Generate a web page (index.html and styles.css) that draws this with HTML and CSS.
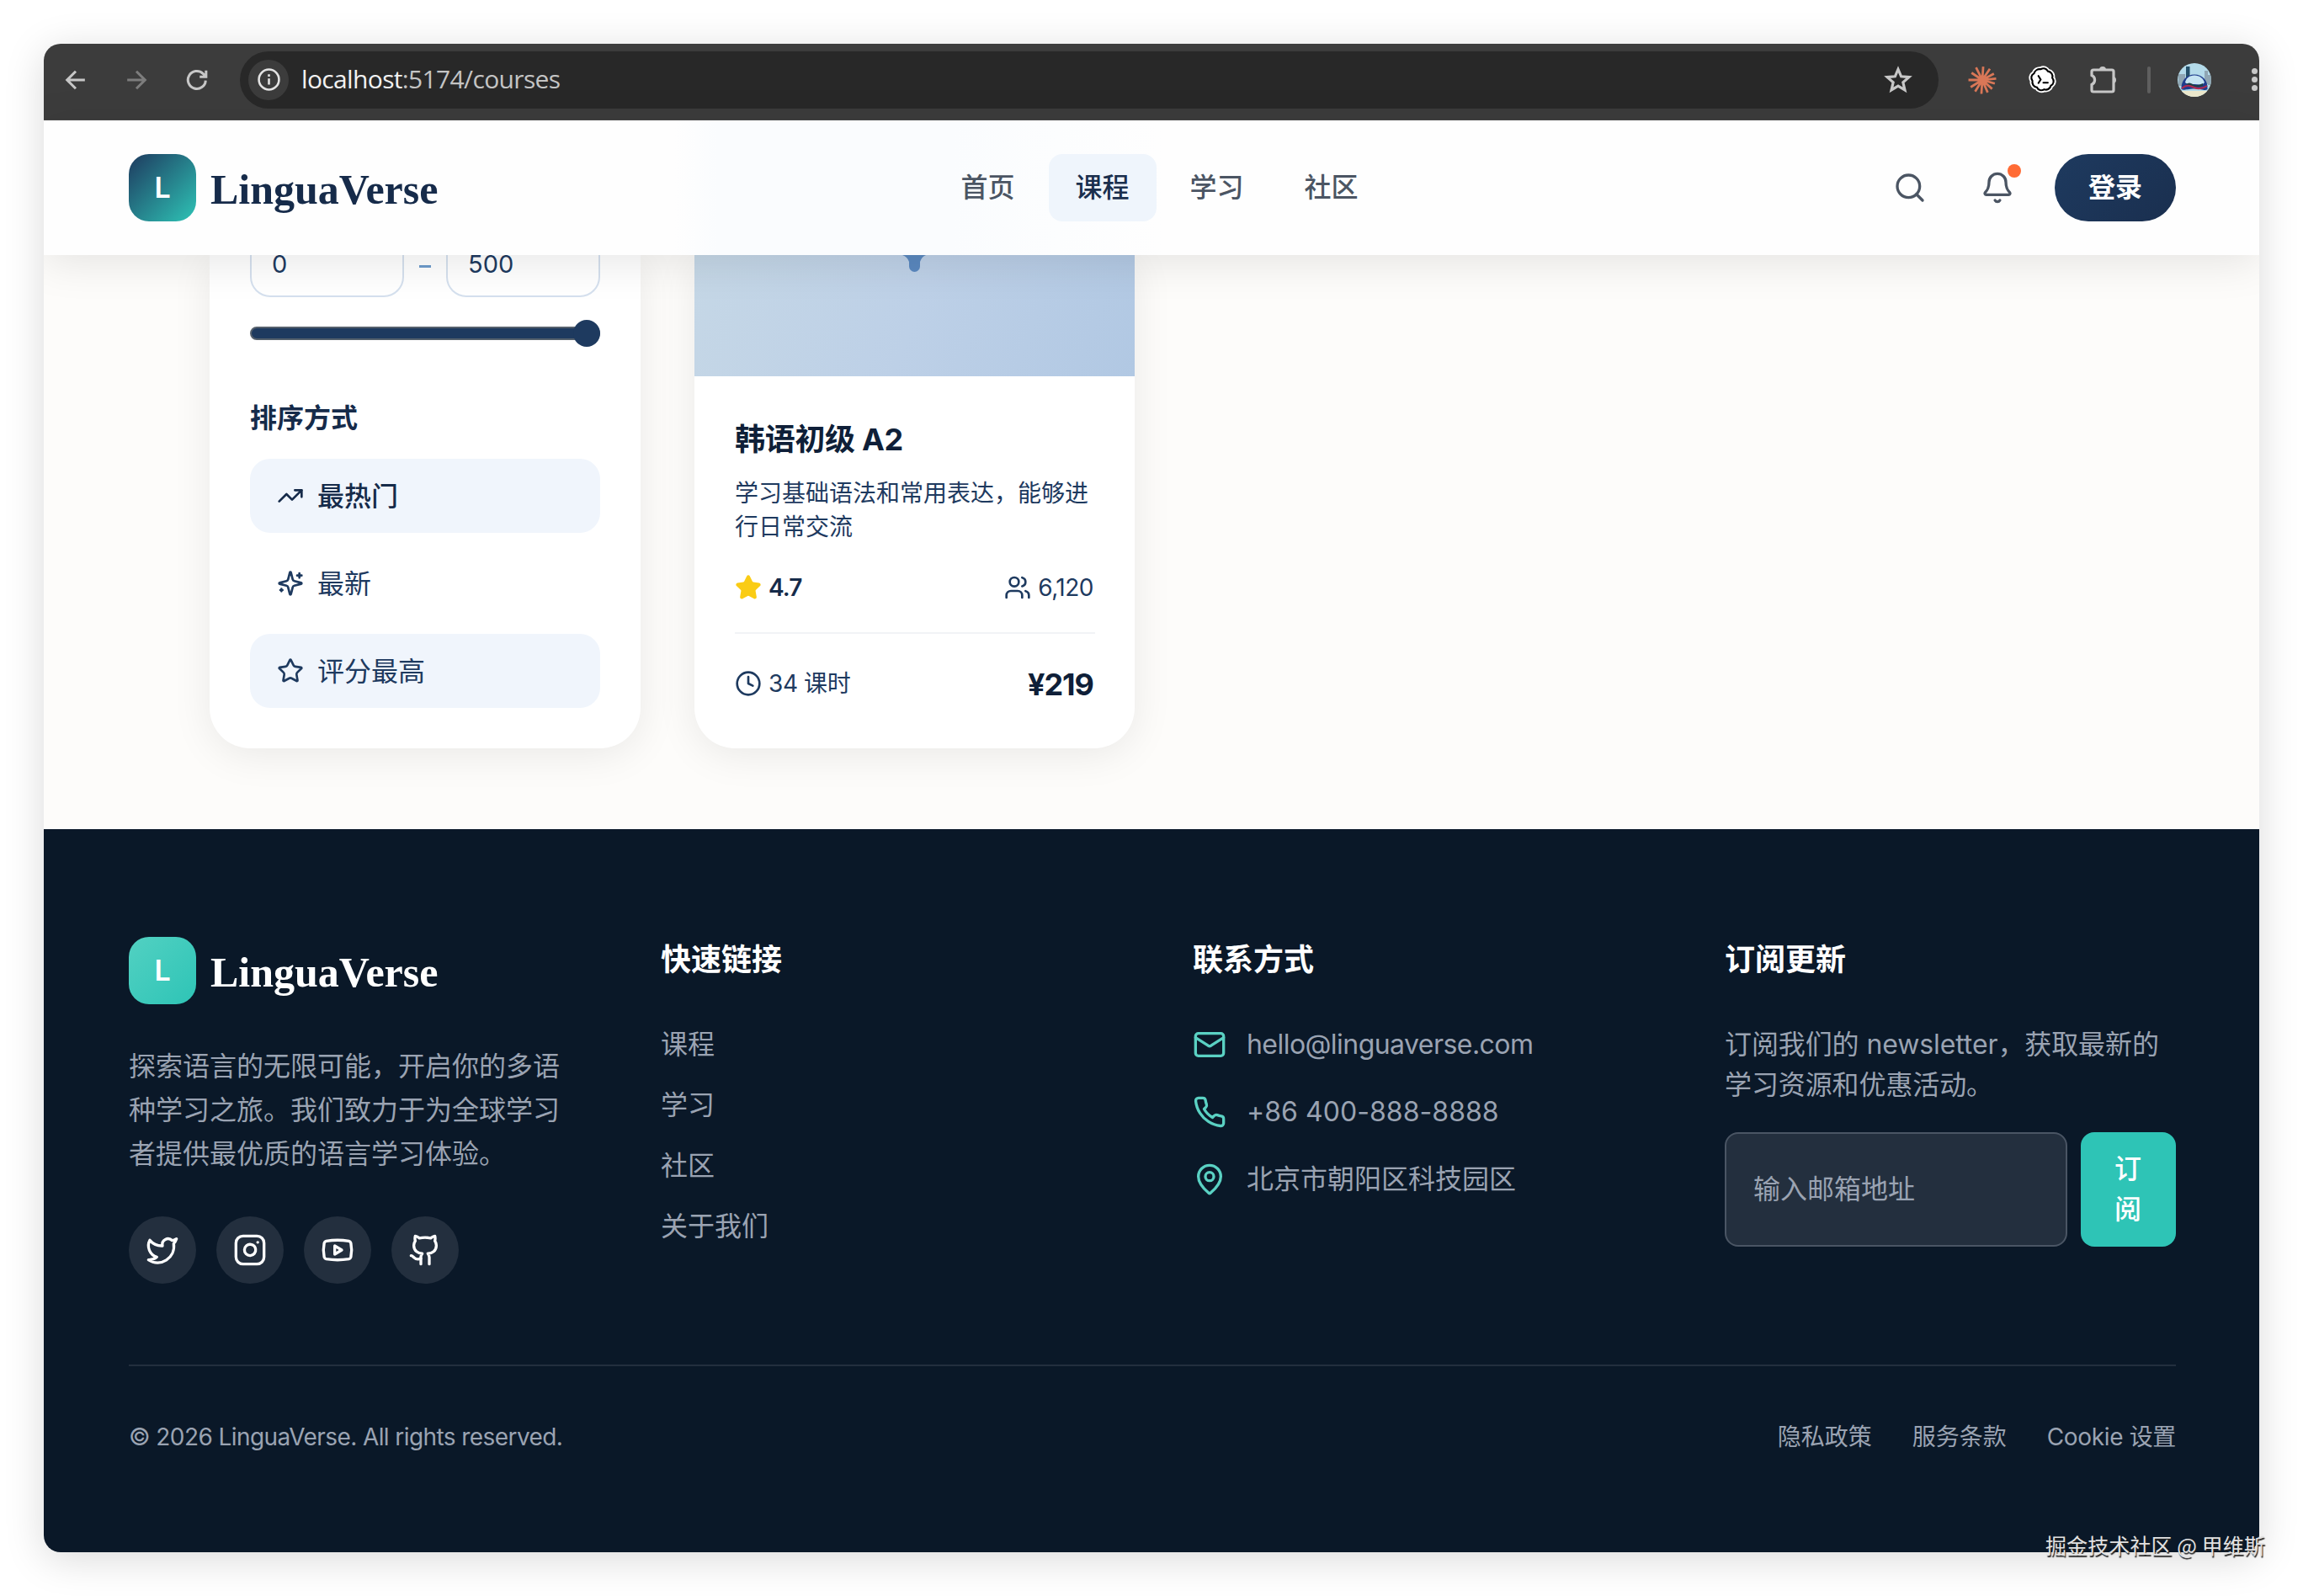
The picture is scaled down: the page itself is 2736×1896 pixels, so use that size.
FILE: index.html
```html
<!DOCTYPE html>
<html lang="zh-CN">
<head>
<meta charset="utf-8">
<title>LinguaVerse</title>
<link rel="stylesheet" href="styles.css">
</head>
<body>
<div class="window">
  <div class="toolbar">
    <svg class="tool" viewBox="0 0 24 24"><path d="M22 12H3M12 2.5 2.5 12l9.500 9.500"/></svg>
    <svg class="tool dim" viewBox="0 0 24 24"><path d="M2 12h19M12 2.500l9.500 9.500-9.500 9.500"/></svg>
    <svg class="tool" viewBox="0 0 24 24"><path d="M21.500 12.500a9.700 9.700 0 1 1-3-7.600L22 8.300M22 1.500v7h-7"/></svg>
    <div class="address">
      <div class="site-info"><svg viewBox="0 0 26 26"><circle cx="13" cy="13" r="11.500"/><path d="M13 11.800v7M13 7v2.600"/></svg></div>
      <div class="url">localhost<span>:5174/courses</span></div>
      <svg class="bookmark" viewBox="0 0 32 32"><path d="M16 4l3.400 8 8.800.8-6.700 5.800 2 8.600L16 22.700l-7.500 4.500 2-8.600-6.700-5.800 8.800-.8z"/></svg>
    </div>
    <svg class="ext burst" viewBox="-16 -16 32 32"><path d="M0 0 1-15M0 0 8.500-12.500M0 0 13-7M0 0 15.500-1.500M0 0 14 4M0 0 11 10M0 0 6 14M0 0-1 15.500M0 0-8 13M0 0-13 8M0 0-15.500 0M0 0-12-8M0 0-7-14"/></svg>
    <svg class="ext codex" viewBox="-16 -16 32 32"><path class="rim" d="M-2.500-12c3.500-2 6.500-.5 8 2.200 3.800.6 6 3.800 5 7.400 2.500 3 1.700 7-1.500 8.600-.8 3.600-4.300 5.500-7.500 4.300-3.200 2-6.800.8-8.200-2.300-3.500-.4-5.800-3.800-5-7.200-2.200-3-1.300-6.800 1.700-8.200C-9-10.500-6-12.500-2.500-12z"/><path class="ring" d="M-2.500-12c3.500-2 6.500-.5 8 2.200 3.800.6 6 3.800 5 7.400 2.500 3 1.700 7-1.500 8.600-.8 3.600-4.300 5.500-7.500 4.300-3.200 2-6.800.8-8.200-2.300-3.500-.4-5.800-3.800-5-7.200-2.200-3-1.300-6.800 1.700-8.200C-9-10.500-6-12.500-2.500-12z"/><path class="ring" d="M-5-4.500-2.500-.5-5 3.500M.5 3h5"/></svg>
    <svg class="ext puzzle" viewBox="0 0 36 38"><path class="tab" d="M12 7a4 4 0 0 1 8 0zM28 15a4 4 0 0 1 0 8z"/><path d="M5 7h22q2 0 2 2v22q0 2-2 2H5q-2 0-2-2v-6.500a6 6 0 0 0 0-11V9q0-2 2-2z"/></svg>
    <div class="separator"></div>
    <svg class="avatar" viewBox="0 0 40 40">
      <defs><clipPath id="face"><circle cx="20" cy="20" r="20"/></clipPath></defs>
      <g clip-path="url(#face)">
        <path fill="#b4dbea" d="M0 0h40v40H0z"/><path fill="#24506a" d="M10 4h4.500v18H10z"/><path fill="#8fa6b3" d="M1 13h8v14H1zM32 9h4v16h-4zM36 14h4v12h-4z"/>
        <path d="M4.500 31C4 20 11 13.500 20 13.500S36.500 20 35.500 31c-3 2.500-6-.5-15.500-.5S7.500 33 4.500 31z" fill="#1f3c8c"/>
        <path d="M9 23c1-5 5-8.500 11-8.500s10.500 3.500 12 8.500c-3 4-8 2-12 2s-8 1-11-2z" fill="#c5e4f2"/>
        <path d="M10 25q4-3 8 0t12-1v3q-9 3-20-2z" fill="#1d3f45"/>
        <path d="M5 30c6-5 10-3 15-1s9 2 15-2" fill="none" stroke="#b32a4e" stroke-width="2"/><path fill="#ece8cc" d="M0 33h40v7H0z"/>
      </g>
    </svg>
    <div class="dots"><i></i><i></i><i></i></div>
  </div>

  <header class="header">
    <div class="brand"><div class="mark">L</div><div class="name">LinguaVerse</div></div>
    <nav class="nav"><a>首页</a><a class="active">课程</a><a>学习</a><a>社区</a></nav>
    <div class="actions">
      <svg class="icon" viewBox="0 0 24 24"><circle cx="11" cy="11" r="8"/><path d="m21 21-4.340-4.340"/></svg>
      <div class="bell">
        <svg class="icon" viewBox="0 0 24 24"><path d="M10.268 21a2 2 0 0 0 3.464 0"/><path d="M3.262 15.326A1 1 0 0 0 4 17h16a1 1 0 0 0 .740-1.673C19.410 13.956 18 12.499 18 8A6 6 0 0 0 6 8c0 4.499-1.411 5.956-2.738 7.326"/></svg>
        <span class="badge"></span>
      </div>
      <div class="login">登录</div>
    </div>
  </header>

  <main class="content">
    <aside class="filters">
      <div class="range"><div class="field">0</div><span class="dash"></span><div class="field">500</div></div>
      <div class="slider"><div class="thumb"></div></div>
      <h3>排序方式</h3>
      <div class="options">
        <div class="option on medium"><svg class="icon" viewBox="0 0 24 24"><path d="M16 7h6v6"/><path d="m22 7-8.500 8.500-5-5L2 17"/></svg><span>最热门</span></div>
        <div class="option"><svg class="icon" viewBox="0 0 24 24"><path d="M9.937 15.500A2 2 0 0 0 8.500 14.063l-6.135-1.582a.5.5 0 0 1 0-.962L8.500 9.936A2 2 0 0 0 9.937 8.500l1.582-6.135a.5.5 0 0 1 .963 0L14.063 8.500A2 2 0 0 0 15.500 9.937l6.135 1.581a.5.5 0 0 1 0 .964L15.500 14.063a2 2 0 0 0-1.437 1.437l-1.582 6.135a.5.5 0 0 1-.963 0z"/><path d="M20 3v4M22 5h-4M4 17v2M5 18H3"/></svg><span>最新</span></div>
        <div class="option on"><svg class="icon" viewBox="0 0 24 24"><path d="M11.525 2.295a.53.53 0 0 1 .95 0l2.310 4.679a2.123 2.123 0 0 0 1.595 1.160l5.166.756a.53.53 0 0 1 .294.904l-3.736 3.638a2.123 2.123 0 0 0-.611 1.878l.882 5.140a.53.53 0 0 1-.771.560l-4.618-2.428a2.122 2.122 0 0 0-1.973 0L6.396 21.010a.53.53 0 0 1-.770-.560l.881-5.139a2.122 2.122 0 0 0-.611-1.879L2.160 9.795a.53.53 0 0 1 .294-.906l5.165-.755a2.122 2.122 0 0 0 1.597-1.160z"/></svg><span>评分最高</span></div>
      </div>
    </aside>
    <article class="course">
      <div class="cover"><svg viewBox="0 0 28 20"><path d="M0 0h28q-5 2-7 8v5.500a6.500 6.500 0 0 1-13 0V8Q6 2 0 0z"/></svg></div>
      <div class="info">
        <h2>韩语初级 A2</h2>
        <p>学习基础语法和常用表达，能够进行日常交流</p>
        <div class="row stats">
          <div class="pair rating"><svg class="icon star" viewBox="0 0 24 24"><path d="M11.525 2.295a.53.53 0 0 1 .95 0l2.310 4.679a2.123 2.123 0 0 0 1.595 1.160l5.166.756a.53.53 0 0 1 .294.904l-3.736 3.638a2.123 2.123 0 0 0-.611 1.878l.882 5.140a.53.53 0 0 1-.771.560l-4.618-2.428a2.122 2.122 0 0 0-1.973 0L6.396 21.010a.53.53 0 0 1-.770-.560l.881-5.139a2.122 2.122 0 0 0-.611-1.879L2.160 9.795a.53.53 0 0 1 .294-.906l5.165-.755a2.122 2.122 0 0 0 1.597-1.160z"/></svg>4.7</div>
          <div class="pair students"><svg class="icon" viewBox="0 0 24 24"><path d="M16 21v-2a4 4 0 0 0-4-4H6a4 4 0 0 0-4 4v2"/><path d="M16 3.128a4 4 0 0 1 0 7.744"/><path d="M22 21v-2a4 4 0 0 0-3-3.870"/><circle cx="9" cy="7" r="4"/></svg>6,120</div>
        </div>
        <div class="row meta">
          <div class="pair lessons"><svg class="icon" viewBox="0 0 24 24"><circle cx="12" cy="12" r="10"/><path d="M12 6v6l4 2"/></svg>34 课时</div>
          <div class="price">¥219</div>
        </div>
      </div>
    </article>
  </main>

  <footer class="footer">
    <div class="columns">
      <section>
        <div class="brand light"><div class="mark">L</div><div class="name">LinguaVerse</div></div>
        <p class="about">探索语言的无限可能，开启你的多语种学习之旅。我们致力于为全球学习者提供最优质的语言学习体验。</p>
        <div class="socials">
          <a><svg class="icon" viewBox="0 0 24 24"><path d="M22 4s-.7 2.100-2 3.400c1.600 10-9.400 17.300-18 11.600 2.200.1 4.400-.6 6-2C3 15.500.5 9.600 3 5c2.200 2.600 5.600 4.100 9 4-.9-4.200 4-6.600 7-3.800 1.100 0 3-1.200 3-1.200z"/></svg></a>
          <a><svg class="icon" viewBox="0 0 24 24"><rect width="20" height="20" x="2" y="2" rx="5"/><path d="M16 11.370A4 4 0 1 1 12.630 8 4 4 0 0 1 16 11.370z"/><path d="M17.500 6.500h.01"/></svg></a>
          <a><svg class="icon" viewBox="0 0 24 24"><path d="M2.500 17a24.120 24.120 0 0 1 0-10 2 2 0 0 1 1.400-1.400 49.560 49.560 0 0 1 16.200 0A2 2 0 0 1 21.500 7a24.120 24.120 0 0 1 0 10 2 2 0 0 1-1.400 1.400 49.550 49.550 0 0 1-16.200 0A2 2 0 0 1 2.500 17"/><path d="m10 15 5-3-5-3z"/></svg></a>
          <a><svg class="icon" viewBox="0 0 24 24"><path d="M15 22v-4a4.800 4.800 0 0 0-1-3.500c3 0 6-2 6-5.500.08-1.250-.27-2.480-1-3.500.28-1.150.28-2.350 0-3.500 0 0-1 0-3 1.500-2.640-.5-5.360-.5-8 0C6 2 5 2 5 2c-.3 1.150-.3 2.350 0 3.500A5.403 5.403 0 0 0 4 9c0 3.500 3 5.500 6 5.500-.39.49-.68 1.050-.85 1.650-.17.6-.22 1.230-.15 1.850v4"/><path d="M9 18c-4.510 2-5-2-7-2"/></svg></a>
        </div>
      </section>
      <section>
        <h4>快速链接</h4>
        <div class="links"><a>课程</a><a>学习</a><a>社区</a><a>关于我们</a></div>
      </section>
      <section>
        <h4>联系方式</h4>
        <div class="contacts">
          <div><svg class="icon" viewBox="0 0 24 24"><path d="m22 7-8.991 5.727a2 2 0 0 1-2.009 0L2 7"/><rect x="2" y="4" width="20" height="16" rx="2"/></svg><span class="mail">hello@linguaverse.com</span></div>
          <div><svg class="icon" viewBox="0 0 24 24"><path d="M22 16.920v3a2 2 0 0 1-2.180 2 19.790 19.790 0 0 1-8.630-3.070 19.500 19.500 0 0 1-6-6 19.790 19.790 0 0 1-3.070-8.670A2 2 0 0 1 4.110 2h3a2 2 0 0 1 2 1.720 12.840 12.840 0 0 0 .7 2.810 2 2 0 0 1-.45 2.110L8.090 9.910a16 16 0 0 0 6 6l1.270-1.270a2 2 0 0 1 2.110-.45 12.840 12.840 0 0 0 2.810.7A2 2 0 0 1 22 16.920z"/></svg><span class="phone">+86 400-888-8888</span></div>
          <div><svg class="icon" viewBox="0 0 24 24"><path d="M20 10c0 4.993-5.539 10.193-7.399 11.799a1 1 0 0 1-1.202 0C9.539 20.193 4 14.993 4 10a8 8 0 0 1 16 0"/><circle cx="12" cy="10" r="3"/></svg><span>北京市朝阳区科技园区</span></div>
        </div>
      </section>
      <section>
        <h4>订阅更新</h4>
        <p class="pitch">订阅我们的 newsletter，获取最新的学习资源和优惠活动。</p>
        <div class="subscribe"><div class="email">输入邮箱地址</div><div class="submit">订阅</div></div>
      </section>
    </div>
    <div class="legal">
      <div class="copyright">© 2026 LinguaVerse. All rights reserved.</div>
      <div class="policies"><a>隐私政策</a><a>服务条款</a><a class="cookie">Cookie 设置</a></div>
    </div>
  </footer>
</div>
<div class="watermark">掘金技术社区 @ 甲维斯</div>
</body>
</html>
```
FILE: styles.css
```css
* { box-sizing: border-box; margin: 0; padding: 0; }
body {
  width: 2736px; height: 1896px; padding: 52px; background: #fff; overflow: hidden;
  font-family: Inter, "Noto Sans CJK SC", sans-serif;
}
svg { display: block; flex: none; }
.icon { fill: none; stroke: currentColor; stroke-width: 2; stroke-linecap: round; stroke-linejoin: round; }
.window {
  width: 2632px; height: 1792px; border-radius: 20px; overflow: hidden;
  display: flex; flex-direction: column; box-shadow: 0 8px 48px rgba(0, 0, 0, .15);
}

/* Browser toolbar */
.toolbar { height: 91px; flex: none; background: #3c3c3c; display: flex; align-items: center; padding: 0 0 5px 25px; border-bottom: 1px solid #484848; }
.tool { width: 26px; height: 26px; margin-right: 46px; fill: none; stroke: #c7c7c7; stroke-width: 2.8; }
.tool.dim { stroke: #7d7d7d; }
.address { width: 2018px; height: 68px; margin-left: -8px; border-radius: 34px; background: #282828; display: flex; align-items: center; padding: 0 31px 0 10px; }
.site-info { width: 48px; height: 48px; border-radius: 50%; background: #3c3c3c; display: grid; place-items: center; }
.site-info svg { width: 27px; height: 27px; fill: none; stroke: #e3e3e3; stroke-width: 2.5; }
.url { margin-left: 15px; flex: 1; font: 30px/40px "Open Sans", sans-serif; letter-spacing: -.65px; color: #f1f1f1; padding-bottom: 1px; }
.url span { color: #c4c4c4; }
.bookmark { width: 34px; height: 34px; fill: none; stroke: #c7c7c7; stroke-width: 3; }
.ext { width: 34px; height: 34px; }
.burst { margin-left: 35px; fill: none; stroke: #d97757; stroke-width: 2.6; }
.codex { margin-left: 38px; }
.rim { fill: #fff; stroke: #fff; stroke-width: 5.5; }
.ring { fill: none; stroke: #000; stroke-width: 2; stroke-linecap: round; }
.puzzle { width: 36px; height: 38px; margin-left: 38px; fill: none; stroke: #c7c7c7; stroke-width: 3.2; }
.puzzle .tab { fill: #c7c7c7; stroke: none; }
.separator { width: 4px; height: 32px; margin-left: 33px; border-radius: 2px; background: #5f5f5f; }
.avatar { width: 40px; height: 40px; margin-left: 32px; }
.dots { margin-left: 48px; display: grid; gap: 3px; }
.dots i { width: 7px; height: 7px; border-radius: 50%; background: #c7c7c7; }

/* Site header */
.header {
  position: relative; z-index: 1; height: 160px; flex: none; padding: 0 99px 0 101px;
  display: flex; align-items: center; justify-content: space-between;
  background: linear-gradient(90deg, #fefefe 750px, #fafcfe 800px, #fafcfe 1080px, #fefefe 1330px);
  box-shadow: 0 8px 48px rgba(0, 0, 0, .1);
}
.brand { display: flex; align-items: center; gap: 17px; width: 380px; height: 80px; }
.mark { width: 80px; height: 80px; border-radius: 24px; background: linear-gradient(135deg, #1e3a5f, #2ec4b6); color: #fff; font: 600 34px/80px Inter, sans-serif; text-align: center; }
.name { font: 700 50px/80px "Liberation Serif", serif; color: #162b4a; padding-top: 3px; }
.light .mark { background: linear-gradient(135deg, #52d1c2, #2ec4b6); }
.light .name { color: #fff; }
.nav { display: flex; gap: 8px; margin-left: -27px; }
.nav a { width: 128px; height: 80px; border-radius: 16px; text-align: center; font-size: 32px; line-height: 80px; font-weight: 500; color: #4b5563; }
.nav .active { background: #eff5fc; color: #1a2f4d; }
.actions { display: flex; align-items: center; color: #4b5563; }
.actions .icon { width: 40px; height: 40px; }
.bell { position: relative; margin: 0 48px 0 64px; }
.badge { position: absolute; left: 32px; top: -8px; width: 16px; height: 16px; border-radius: 50%; background: #ff6b35; }
.login { width: 144px; height: 80px; border-radius: 40px; background: linear-gradient(135deg, #1e3a5f, #1a2f4f); color: #fff; font-size: 32px; line-height: 80px; font-weight: 600; text-align: center; }

/* Course listing */
.content { height: 682px; flex: none; background: #fdfcfa; padding: 0 197px; display: flex; align-items: flex-start; gap: 64px; }
.filters, .course { height: 586px; background: #fff; border-radius: 0 0 48px 48px; box-shadow: 0 8px 48px rgba(0, 0, 0, .08); }
.filters { width: 512px; padding: 0 48px; color: #1e3a5f; }
.range { display: flex; justify-content: space-between; height: 50px; }
.field { width: 183px; border: 2px solid #d5e0ee; border-top: 0; border-radius: 0 0 24px 24px; padding-left: 24px; font-size: 29px; line-height: 22px; }
.dash { width: 14px; height: 3px; margin-top: 12px; background: #6e9ccb; }
.slider { height: 16px; margin-top: 35px; border: 2px solid #55606c; border-radius: 8px; background: #1e3a5f; display: flex; justify-content: flex-end; align-items: center; }
.thumb { width: 32px; height: 32px; flex: none; margin-right: -2px; border-radius: 50%; background: #1e3a5f; }
.filters h3 { margin-top: 69px; font-size: 32px; line-height: 48px; font-weight: 700; color: #162b4a; }
.options { margin-top: 24px; display: grid; gap: 16px; }
.option { height: 88px; border-radius: 24px; display: flex; align-items: center; gap: 16px; padding: 0 32px; font-size: 32px; }
.option span { padding-bottom: 4px; }
.option .icon { width: 32px; height: 32px; }
.option.on { background: #f0f5fc; }
.medium { font-weight: 500; color: #162b4a; }
.course { width: 523px; }
.cover { height: 144px; background: linear-gradient(110deg, #c5d7e6, #bdd0e7 50%, #b1c8e3); display: flex; justify-content: center; }
.cover svg { width: 28px; height: 20px; margin-right: 2px; fill: #5a88bf; }
.info { padding: 48px 47px 0 48px; color: #1e3a5f; font-size: 28px; }
.info h2 { font-size: 36px; line-height: 54px; font-weight: 700; color: #0f1f38; letter-spacing: -.3px; }
.info p { margin-top: 17px; line-height: 40px; }
.row { display: flex; align-items: center; justify-content: space-between; }
.pair { display: flex; align-items: center; gap: 8px; line-height: 38px; padding-bottom: 2px; }
.pair .icon { width: 32px; height: 32px; }
.stats { margin-top: 33px; height: 40px; }
.rating { font-weight: 600; color: #162b4a; letter-spacing: -.9px; }
.rating .icon { color: #facc15; fill: #facc15; }
.students { letter-spacing: -.5px; margin-right: 2px; }
.lessons { letter-spacing: -.4px; }
.meta { margin-top: 32px; border-top: 2px solid #f1f3f6; padding-top: 32px; }
.price { font-size: 36px; line-height: 56px; font-weight: 700; color: #0f1f38; letter-spacing: -1px; margin-right: 2px; }

/* Footer */
.footer { flex: 1; background: #0a1828; padding: 128px 99px 0 101px; color: #9aa3b2; font-size: 32px; }
.columns { display: grid; grid-template-columns: repeat(4, 536px); gap: 96px; height: 508px; }
.about { margin-top: 48px; line-height: 52px; }
.socials { display: flex; gap: 24px; margin-top: 48px; }
.socials a { width: 80px; height: 80px; border-radius: 50%; background: #232f3e; color: #fff; display: grid; place-items: center; }
.socials .icon, .contacts .icon { width: 40px; height: 40px; }
.footer h4 { font-size: 36px; line-height: 54px; font-weight: 700; color: #fff; }
.links { margin-top: 50px; display: grid; gap: 24px; }
.links a { line-height: 48px; }
.contacts { margin-top: 50px; display: grid; gap: 32px; }
.contacts div { display: flex; align-items: center; gap: 24px; line-height: 48px; }
.contacts .icon { color: #5ad1c3; }
.mail { letter-spacing: -.55px; }
.phone { letter-spacing: .05px; }
.pitch { margin-top: 50px; line-height: 48px; letter-spacing: -.1px; }
.subscribe { display: flex; gap: 16px; margin-top: 32px; }
.email { width: 407px; height: 136px; border: 2px solid #4a5564; border-radius: 16px; background: #232f3e; padding-left: 32px; line-height: 132px; }
.submit { width: 113px; height: 136px; border-radius: 16px; background: #2ec4b6; color: #fff; font-weight: 500; line-height: 48px; padding: 20px 40px; }
.legal { border-top: 2px solid #232f3e; display: flex; justify-content: space-between; padding-top: 64px; font-size: 28px; line-height: 40px; }
.copyright { letter-spacing: -.58px; }
.policies { display: flex; gap: 48px; }
.cookie { letter-spacing: -.35px; }
.watermark { position: absolute; left: 2430px; top: 1817px; font: 25px/36px "Noto Sans CJK SC", sans-serif; letter-spacing: .1px; white-space: nowrap; color: #e2e2e2; text-shadow: 1px 2px 1px #222; }
```
